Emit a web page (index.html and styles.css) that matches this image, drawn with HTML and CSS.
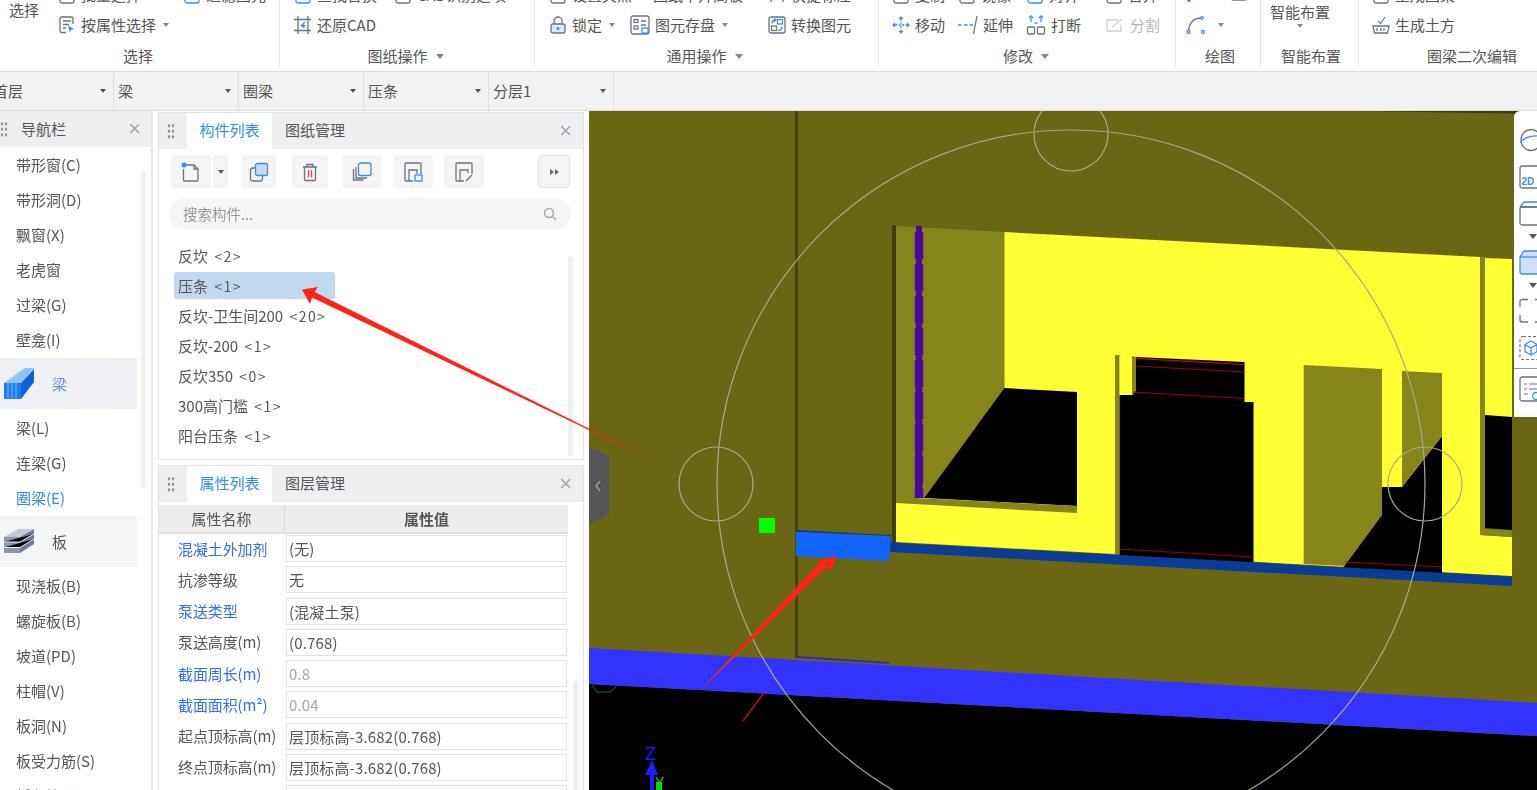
FILE: index.html
```html
<!DOCTYPE html>
<html lang="zh">
<head>
<meta charset="utf-8">
<title>圈梁</title>
<link rel="stylesheet" href="styles.css">
</head>
<body>
<div class="app">
  <header class="ribbon">
    <section class="group g1">
      <div class="rows">
        <span class="big">选择</span>
        <span class="item"><svg class="ic" viewBox="0 0 18 18"><rect x="2" y="1" width="14" height="16" rx="2" class="g"/></svg>批量选择</span>
        <span class="item"><svg class="ic" viewBox="0 0 18 18"><rect x="2" y="1" width="14" height="16" rx="2" class="b"/></svg>过滤图元</span>
        <span class="item"><svg class="ic" viewBox="0 0 18 18"><path class="g" d="M8 16.500H3.500a1.500 1.500 0 0 1-1.500-1.500V2.500A1.500 1.500 0 0 1 3.500 1h10A1.500 1.500 0 0 1 15 2.500V8"/><path class="g" d="M5 5h8M5 8.500h6M5 12h3"/><path class="bf" d="M10 9.500l6 3.500-3 .8-1.200 2.700z"/></svg>按属性选择<i class="caret"></i></span>
      </div>
      <div class="label">选择</div>
    </section>
    <section class="group g2">
      <div class="rows">
        <span class="item"><svg class="ic" viewBox="0 0 18 18"><rect x="2" y="1" width="14" height="16" rx="2" class="b"/></svg>查找替换</span>
        <span class="item"><svg class="ic" viewBox="0 0 18 18"><rect x="2" y="1" width="14" height="16" rx="2" class="g"/></svg>CAD识别选项</span>
        <span class="item"><svg class="ic" viewBox="0 0 18 18"><path class="g" d="M4 0v18M0 3.500h17M14 0v18M0 14.500h17"/><path class="bs" d="M11 6L7.500 9.500h4M8 9.500l2.500 2.500"/></svg>还原CAD</span>
      </div>
      <div class="label">图纸操作<i class="caret lg"></i></div>
    </section>
    <section class="group g3">
      <div class="rows">
        <span class="item"><svg class="ic" viewBox="0 0 18 18"><rect x="2" y="1" width="14" height="16" rx="2" class="g"/></svg>设置夹点</span>
        <span class="item"><svg class="ic" viewBox="0 0 18 18"><path class="bf" d="M9 2l2 4 4 .5-3 3 1 4-4-2-4 2 1-4-3-3 4-.5z"/></svg>图纸中升高板</span>
        <span class="item"><svg class="ic" viewBox="0 0 18 18"><path class="g" d="M3 2v14M15 2v14"/></svg>快捷标注</span>
        <span class="item"><svg class="ic" viewBox="0 0 18 18"><rect class="lbl g" x="2" y="8" width="14" height="9" rx="2"/><path class="g" d="M5 8V5a4 4 0 0 1 8 0v3"/><circle class="bf" cx="9" cy="12.500" r="1.500"/></svg>锁定<i class="caret"></i></span>
        <span class="item"><svg class="ic w20" viewBox="0 0 20 20"><rect class="g" x="1" y="1" width="18" height="18" rx="2"/><rect class="g" x="4" y="4.500" width="4" height="3"/><rect class="g" x="4" y="11" width="4" height="3"/><path class="g" d="M11 6h5M11 10h5"/><rect class="bs" x="12" y="13" width="6" height="5"/></svg>图元存盘<i class="caret"></i></span>
        <span class="item"><svg class="ic" viewBox="0 0 18 18"><rect class="g" x="1" y="1" width="16" height="16" rx="2"/><rect class="bs" x="9.500" y="3.500" width="5" height="4.500"/><rect class="g" x="3.500" y="10" width="5" height="4.500"/><path class="bs" d="M4 7.500C4 5 5.500 4 8 4M6 2.500L8 4 6 5.500M14 10.500c0 2.500-1.500 4-4 4"/></svg>转换图元</span>
      </div>
      <div class="label">通用操作<i class="caret lg"></i></div>
    </section>
    <section class="group g4">
      <div class="rows">
        <span class="item"><svg class="ic" viewBox="0 0 18 18"><rect x="2" y="1" width="14" height="16" rx="2" class="g"/></svg>复制</span>
        <span class="item"><svg class="ic" viewBox="0 0 18 18"><rect x="2" y="1" width="14" height="16" rx="2" class="g"/></svg>镜像</span>
        <span class="item"><svg class="ic" viewBox="0 0 18 18"><rect x="2" y="1" width="14" height="16" rx="2" class="b"/></svg>对齐</span>
        <span class="item"><svg class="ic" viewBox="0 0 18 18"><rect x="2" y="1" width="14" height="16" rx="2" class="g"/></svg>合并</span>
        <span class="item"><svg class="ic" viewBox="0 0 18 18"><path class="bs" d="M9 3v12M3 9h12" stroke-dasharray="2 1.500"/><path class="bf" d="M9 0l2.500 3h-5zM9 18l-2.500-3h5zM0 9l3-2.500v5zM18 9l-3-2.500v5z"/></svg>移动</span>
        <span class="item"><svg class="ic w20" viewBox="0 0 20 20"><path class="bs" d="M0 10h3.500M6 10h3.500M11.500 10h3.500"/><path class="g" d="M19 1l-3.500 18"/></svg>延伸</span>
        <span class="item"><svg class="ic w20" viewBox="0 0 20 20"><rect class="g" x="1.500" y="12" width="7" height="7" rx="1"/><rect class="g" x="11.500" y="12" width="7" height="7" rx="1"/><path class="bs" d="M5 7V3M15 7V3M3 3l2-2 2 2M13 3l2-2 2 2M8.500 8H11.500"/></svg>打断</span>
        <span class="item off"><svg class="ic w20" viewBox="0 0 20 20"><path class="lt" d="M13 5H2v11h14v-6"/><path class="lt" d="M7 12l10-8"/></svg>分割</span>
      </div>
      <div class="label">修改<i class="caret lg"></i></div>
    </section>
    <section class="group g5">
      <div class="rows">
        <span class="item"><svg class="ic" viewBox="0 0 18 18"><circle class="bf" cx="3" cy="14" r="2"/></svg></span>
        <span class="item"><svg class="ic" viewBox="0 0 18 18"><rect x="1" y="1" width="16" height="13" rx="2" class="g"/></svg></span>
        <span class="item"><svg class="ic w20" viewBox="0 0 20 20"><path class="g" d="M2.500 16C3 8 8 3 15 3"/><circle class="bs" cx="2.500" cy="17" r="1.500"/><circle class="bs" cx="16" cy="3" r="1.300"/><circle class="bs" cx="17" cy="17" r="1.500"/></svg><i class="caret"></i></span>
      </div>
      <div class="label">绘图</div>
    </section>
    <section class="group g6">
      <div class="smart"><span>智能布置</span><i class="caret"></i></div>
      <div class="label">智能布置</div>
    </section>
    <section class="group g7">
      <div class="rows">
        <span class="item"><svg class="ic" viewBox="0 0 18 18"><rect x="2" y="1" width="14" height="16" rx="2" class="g"/></svg>生成圈梁</span>
        <span class="item"><svg class="ic" viewBox="0 0 18 18"><path class="g" d="M1 10h16l-1.500 7h-13z"/><path class="g" d="M5 15v-3M9 15v-3M12 15v-3"/><path class="bs" d="M6 5l2.500 2.500L13 1"/></svg>生成土方</span>
      </div>
      <div class="label">圈梁二次编辑</div>
    </section>
  </header>

  <nav class="selects">
    <div class="sel first"><span>首层</span><i class="caret dk"></i></div>
    <div class="sel"><span>梁</span><i class="caret dk"></i></div>
    <div class="sel"><span>圈梁</span><i class="caret dk"></i></div>
    <div class="sel"><span>压条</span><i class="caret dk"></i></div>
    <div class="sel"><span>分层1</span><i class="caret dk"></i></div>
  </nav>

  <main class="main">
    <aside class="nav">
      <div class="nav-head">
        <span class="dots sm"></span>
        <span class="nav-title">导航栏</span>
        <span class="close">×</span>
      </div>
      <div class="nav-body">
        <a>带形窗(C)</a><a>带形洞(D)</a><a>飘窗(X)</a><a>老虎窗</a><a>过梁(G)</a><a>壁龛(I)</a>
        <div class="cat on">
          <svg class="cat-ic" viewBox="0 0 30 32"><path fill="#8cc4ff" d="M0 15L21 0h9L17 15z"/><path fill="#1e7cf0" d="M0 15h17v16H0z"/><path fill="#0d62d6" d="M17 15L30 1v13L17 31z"/><path stroke="#7db8fb" d="M4 15v16M8 15v16M12 15v16"/></svg>
          <span>梁</span>
        </div>
        <a>梁(L)</a><a>连梁(G)</a><a class="cur">圈梁(E)</a>
        <div class="cat">
          <svg class="cat-ic" viewBox="0 0 30 26"><path fill="#c4cad8" d="M0 8L14 0h16L16 8z"/><path fill="#8a95ad" d="M0 8h16v16H0z"/><path fill="#6f7a93" d="M16 8L30 0v15L16 24z"/><path stroke="#e6e9f0" d="M0 13h16L30 5M0 18.500h16L30 10"/></svg>
          <span>板</span>
        </div>
        <a>现浇板(B)</a><a>螺旋板(B)</a><a>坡道(PD)</a><a>柱帽(V)</a><a>板洞(N)</a><a>板受力筋(S)</a><a>板负筋(F)</a>
      </div>
      <span class="nav-scroll"></span>
    </aside>

    <div class="panels">
      <section class="panel top">
        <div class="tabs">
          <span class="dots"></span>
          <span class="tab active">构件列表</span>
          <span class="tab">图纸管理</span>
          <span class="close">×</span>
        </div>
        <div class="tools">
          <span class="btn new"><svg viewBox="0 0 20 20" width="20" height="20"><path class="g" d="M5 3h8l4 4v11a1 1 0 0 1-1 1H3.500a1 1 0 0 1-1-1V7"/><path class="g" d="M13 3v4h4"/><path class="bs" d="M1 1l4 4M5 1L1 5M3 .5v5M.5 3h5"/></svg></span>
          <span class="btn more"><i class="caret dk"></i></span>
          <span class="btn"><svg viewBox="0 0 20 20" width="20" height="20"><rect class="g" x="1.500" y="6" width="12" height="13" rx="2.500"/><rect class="bs fillb" x="6.500" y="1.500" width="12" height="12" rx="2"/></svg></span>
          <span class="btn"><svg viewBox="0 0 20 20" width="20" height="20"><path class="g" d="M3 5h14M7 5V2.500h6V5M4.500 5v12.500a1 1 0 0 0 1 1h9a1 1 0 0 0 1-1V5"/><path class="rs" d="M8.500 8v7.500M11.500 8v7.500"/></svg></span>
          <span class="btn"><svg viewBox="0 0 20 20" width="20" height="20"><path class="g" d="M1.500 7v11h10M4 5v11h11"/><rect class="bs" x="6.500" y="1" width="12.500" height="12.500" rx="2"/></svg></span>
          <span class="btn"><svg viewBox="0 0 20 20" width="20" height="20"><path class="g" d="M10 19H3a1 1 0 0 1-1-1V2a1 1 0 0 1 1-1h14a1 1 0 0 1 1 1v10"/><path class="g" d="M6 19V8h8v4"/><rect class="bs" x="12" y="13" width="7" height="6"/></svg></span>
          <span class="btn"><svg viewBox="0 0 20 20" width="20" height="20"><path class="g" d="M10 19H3a1 1 0 0 1-1-1V2a1 1 0 0 1 1-1h14a1 1 0 0 1 1 1v10"/><path class="g" d="M6 19V8h8v3"/><path class="g" d="M12 19l6-6"/></svg></span>
          <span class="btn end"><i class="ff"></i><i class="ff"></i></span>
        </div>
        <div class="search">
          <span>搜索构件...</span>
          <svg viewBox="0 0 14 14" width="14" height="14"><circle cx="6" cy="6" r="4.500" fill="none" stroke="#a8a8a8" stroke-width="1.500"/><path d="M9.500 9.500L13 13" stroke="#a8a8a8" stroke-width="1.500"/></svg>
        </div>
        <ul class="list">
          <li>反坎 <em>&lt;2&gt;</em></li>
          <li class="sel-row">压条 <em>&lt;1&gt;</em></li>
          <li>反坎-卫生间200 <em>&lt;20&gt;</em></li>
          <li>反坎-200 <em>&lt;1&gt;</em></li>
          <li>反坎350 <em>&lt;0&gt;</em></li>
          <li>300高门槛 <em>&lt;1&gt;</em></li>
          <li>阳台压条 <em>&lt;1&gt;</em></li>
        </ul>
        <span class="list-scroll"></span>
      </section>

      <section class="panel props">
        <div class="tabs">
          <span class="dots"></span>
          <span class="tab active">属性列表</span>
          <span class="tab">图层管理</span>
          <span class="close">×</span>
        </div>
        <div class="thead"><span>属性名称</span><span class="val">属性值</span></div>
        <div class="prow"><label class="link">混凝土外加剂</label><span class="in">(无)</span></div>
        <div class="prow"><label>抗渗等级</label><span class="in">无</span></div>
        <div class="prow"><label class="link">泵送类型</label><span class="in">(混凝土泵)</span></div>
        <div class="prow"><label>泵送高度(m)</label><span class="in">(0.768)</span></div>
        <div class="prow"><label class="link">截面周长(m)</label><span class="in dis">0.8</span></div>
        <div class="prow"><label class="link">截面面积(m²)</label><span class="in dis">0.04</span></div>
        <div class="prow"><label>起点顶标高(m)</label><span class="in">层顶标高-3.682(0.768)</span></div>
        <div class="prow"><label>终点顶标高(m)</label><span class="in">层顶标高-3.682(0.768)</span></div>
        <div class="prow"><label></label><span class="in"></span></div>
        <span class="prop-scroll"></span>
      </section>
    </div>

    <div class="view">
      <svg class="scene" viewBox="589 111 948 679" width="948" height="679">
        <rect x="589" y="111" width="948" height="679" fill="#6b6614"/>
        <path fill="#3f3d0c" d="M1360 111h177v3z"/>
        <!-- floor band and void -->
        <path fill="#000" d="M589 684L1537 736V790H589z"/>
        <path fill="#3333ff" d="M589 648L1537 703V736L589 684z"/>
        <path fill="none" stroke="#0a7a0a" stroke-width="1" d="M592 685l5 7h13l6-5"/>
        <path stroke="#b01010" stroke-width="1.500" d="M763 694L743 721"/>
        <!-- wall edges -->
        <path stroke="#3f3d0c" stroke-width="2.500" d="M796.500 111V658"/>
        <path stroke="#2e2e9e" stroke-width="2" d="M797 657L889 663"/>
        <path fill="#3f3d0c" d="M892 225h4v318h-4z"/>
        <!-- yellow wall -->
        <path fill="#ffff33" d="M1004 232L1480 257V535L1512 537V576L896 542V503L1004 400z"/>
        <path fill="#ffff33" d="M1485 258L1512 259V420H1485z"/>
        <path fill="#88841c" d="M1480 257h5V529L1512 530V537L1480 535z"/>
        <path fill="#000" d="M1485 415L1512 417V530L1485 528z"/>
        <!-- left bay -->
        <path fill="#88841c" d="M896 226L1004.500 232V388L924 498H896z"/>
        <path fill="#4b0a96" d="M916 226H922L922.500 498H915z"/>
        <path stroke="#4b0a96" stroke-width="8.500" stroke-dasharray="27 5" d="M919 232V498"/>
        <path fill="#000" d="M1004.500 388L1077 392V506L924 498z"/>
        <path fill="#88841c" d="M896 497L1077 506V513L896 503z"/>
        <!-- door -->
        <path fill="#88841c" d="M1115 355H1119.600V554L1115 554z"/>
        <path fill="#000" d="M1119.600 395L1133 395L1136 357L1244.500 362V402L1253.500 402V564L1119.600 556z"/>
        <path fill="#ffff33" d="M1119.600 356H1132V395H1119.600z"/>
        <path fill="#88841c" d="M1132 356L1136 357V391L1132 395z"/>
        <path stroke="#f00000" stroke-width="1.200" d="M1136 358.500L1244.500 364.500"/>
        <path stroke="#a00000" stroke-width="1" d="M1136 366L1244.500 372M1134 392L1244.500 398.500M1119.600 549L1253.500 557"/>
        <!-- right bay -->
        <path fill="#88841c" d="M1303.700 365L1382 369V515L1344 566L1303.700 564z"/>
        <path fill="#000" d="M1382 515V487L1402 487L1442 436V575L1342 569z"/>
        <path fill="#88841c" d="M1402 371L1442 373V436L1402 487z"/>
        <path stroke="#a00000" stroke-width="1" d="M1345 562L1442 567"/>
        <!-- blue strips -->
        <path fill="#0a3c96" d="M891 542.500L1512 576.500V586L890 552z"/>
        <path fill="#0a3c96" d="M796 530L891 535V552L889 536L796 532z"/>
        <path fill="#1464ff" d="M796 532L890.700 536.500L889 561L796 556z"/>
        <rect x="759" y="518" width="16" height="15" fill="#00ff00"/>
        <!-- rings -->
        <g fill="none" stroke="#a9a98c" stroke-width="1.200">
          <circle cx="1071" cy="484" r="354"/>
          <circle cx="716" cy="484" r="37"/>
          <circle cx="1071" cy="134" r="37"/>
          <circle cx="1425" cy="484" r="37"/>
        </g>
        <!-- axis -->
        <text x="645" y="760" class="axis-z">Z</text>
        <path fill="#1c1cff" d="M652 760L658 775H654V790H650V775H645z"/>
        <path fill="#00e000" d="M656 782h6v8h-6z"/>
        <text x="655" y="787" class="axis-y">Y</text>
      </svg>
      <div class="handle"><svg viewBox="0 0 8 12" width="8" height="12"><path d="M6 1L2 6l4 5" fill="none" stroke="#9a9a9a" stroke-width="1.500"/></svg></div>
      <div class="side">
        <svg class="sphere" viewBox="0 0 23 24" width="23" height="24"><ellipse cx="12" cy="12" rx="10" ry="10.500" fill="none" stroke="#6b7280" stroke-width="1.300"/><path d="M1.500 15C5 9 12 7 23 8" fill="none" stroke="#3d8bf0" stroke-width="1.300"/></svg>
        <svg viewBox="0 0 23 24" width="23" height="24"><rect x="1" y="1" width="26" height="22" rx="2" fill="none" stroke="#6b7280" stroke-width="1.300"/><text x="2.500" y="20" class="two-d">2D</text></svg>
        <svg viewBox="0 0 23 26" width="23" height="26"><path d="M1 7L5 2H30" fill="none" stroke="#3d8bf0" stroke-width="1.300"/><path d="M1 7H30" stroke="#3d8bf0" stroke-width="1.300"/><rect x="1" y="7" width="28" height="18" rx="2" fill="none" stroke="#6b7280" stroke-width="1.300"/></svg>
        <i class="side-caret"></i>
        <svg viewBox="0 0 23 26" width="23" height="26"><path d="M1 8L5 2H30V25H3a2 2 0 0 1-2-2z" fill="#cfe0f8" stroke="#3d8bf0" stroke-width="1.300"/><path d="M1 8H30" stroke="#3d8bf0" stroke-width="1.300"/></svg>
        <i class="side-caret"></i>
        <svg viewBox="0 0 23 26" width="23" height="26"><path d="M9 1.500H3a2 2 0 0 0-2 2V9M1 17v5a2 2 0 0 0 2 2h6M16 1.500h6M16 24h6" fill="none" stroke="#6b7280" stroke-width="1.300"/></svg>
        <svg viewBox="0 0 23 26" width="23" height="26"><rect x="1" y="1.500" width="26" height="23" rx="3" fill="none" stroke="#6b7280" stroke-width="1.200" stroke-dasharray="3 2"/><path d="M12 6l6 3.500v7L12 20l-6-3.500v-7zM6 9.500l6 3.500 6-3.500M12 13v7" fill="none" stroke="#3d8bf0" stroke-width="1.300"/></svg>
        <hr class="side-sep">
        <svg viewBox="0 0 23 26" width="23" height="26"><rect x="1" y="1" width="26" height="24" rx="2" fill="none" stroke="#6b7280" stroke-width="1.300"/><path d="M5 8h3M10 8h12M5 13h3M10 13h12M5 18h4" stroke="#6b7280" stroke-width="1.200"/><circle cx="17" cy="20" r="3.500" fill="none" stroke="#3d8bf0" stroke-width="1.300"/></svg>
      </div>
    </div>
  </main>

  <svg class="marks" viewBox="0 0 1537 790" width="1537" height="790">
    <path fill="#ff2418" d="M302 289.500L318 287L314.500 292L662 465L312 297.500L310 304z"/>
    <path fill="#ff2418" d="M836 556L831 572L826.500 566.500L697 694L820.500 561.500L817 561z"/>
  </svg>
</div>
</body>
</html>
```
FILE: styles.css
```css
* { box-sizing: border-box; }
html, body { margin: 0; height: 100%; overflow: hidden; background: #fff; }
body { font: 15px/20px "Noto Sans CJK SC", "Liberation Sans", sans-serif; color: #555; }
.app { position: relative; width: 1537px; height: 790px; overflow: hidden; display: flex; flex-direction: column; filter: blur(.4px); }

/* shared strokes */
.g, .b, .bs, .rs, .lt { fill: none; stroke-width: 1.300; }
.g { stroke: #6b7280; }
.b, .bs { stroke: #3d8bf0; }
.rs { stroke: #e0483c; }
.lt { stroke: #cfcfcf; }
.bf { fill: #3d8bf0; }
.fillb { fill: #c6daf6; }
.lbl { fill: #dbe8f8; }

.caret { display: inline-block; width: 0; height: 0; border: 3.500px solid transparent; border-top: 4px solid #888; border-bottom: 0; margin-left: 7px; }
.caret.lg { border-width: 4.500px; border-top-width: 5px; border-bottom-width: 0; margin-left: 8px; }
.caret.dk { border-top-color: #555; margin-left: 0; border-width: 3px; border-top-width: 4px; border-bottom-width: 0; }

/* ribbon */
.ribbon { flex: 0 0 72px; display: flex; align-items: flex-start; background: #fff; border-bottom: 1px solid #dedede; overflow: hidden; }
.group { flex: none; height: 66px; display: flex; flex-direction: column; justify-content: flex-end; border-right: 1px solid #e2e2e2; white-space: nowrap; }
.g1 { width: 280px; }
.g2 { width: 255px; }
.g3 { width: 344px; }
.g4 { width: 297px; }
.g5 { width: 85px; }
.g6 { width: 98px; }
.g7 { flex: 1; border-right: 0; }
.rows { display: grid; grid-auto-rows: 30px; align-items: center; margin-bottom: 6px; }
.g1 .rows { grid-template-columns: 49px 125px 1fr; padding-left: 9px; }
.g2 .rows { grid-template-columns: 100px 1fr; padding-left: 14px; }
.g3 .rows { grid-template-columns: 81px 138px 1fr; padding-left: 14px; }
.g4 .rows { grid-template-columns: 66px 68px 79px 1fr; padding-left: 13px; }
.g5 .rows { grid-template-columns: 44px 1fr; padding-left: 10px; }
.g7 .rows { padding-left: 13px; }
.big { grid-row: 1 / span 2; align-self: start; padding-top: 20px; }
.item { display: flex; align-items: center; color: #555; }
.item.off { color: #b5b5b5; }
.ic { width: 18px; height: 18px; flex: none; margin-right: 5px; }
.ic.w20 { width: 20px; height: 20px; }
.label { height: 20px; line-height: 20px; text-align: center; display: flex; align-items: center; justify-content: center; }
.g1 .label { margin-left: -3px; }
.g2 .label { padding-right: 3px; }
.g3 .label { padding-right: 4px; }
.g4 .label { padding-right: 2px; }
.g5 .label { justify-content: flex-end; padding-right: 25px; }
.g6 .label { margin-left: 20px; justify-content: flex-start; }
.g7 .label { justify-content: flex-end; padding-right: 20px; }
.smart { flex: 1; display: flex; flex-direction: column; padding: 0 0 6px 9px; align-items: flex-start; margin-top: -4px; }
.smart .caret { margin: 2px 0 0 27px; }
.smart span { margin-top: 6px; }

/* select row */
.selects { flex: 0 0 39px; display: flex; background: #f2f2f2; border-bottom: 1px solid #dcdcdc; }
.sel { width: 125px; display: flex; align-items: center; justify-content: space-between; padding: 0 7px 0 4px; border-right: 1px solid #e0e0e0; }
.sel.first { width: 114px; padding-left: 0; }
.sel.first span { margin-left: -7px; }

/* main */
.main { flex: 1; display: flex; min-height: 0; position: relative; }

.nav { flex: 0 0 153px; position: relative; border-right: 2px solid #e8e8e8; overflow: hidden; background: #fff; }
.nav-head { height: 36px; background: #eeeff1; display: flex; align-items: center; padding-left: 21px; position: relative; }
.nav-head .close { right: 10px; }
.nav-body { display: flex; flex-direction: column; }
.nav-body a { height: 35px; line-height: 35px; padding-left: 16px; flex: none; }
.nav-body a.cur { color: #2f8cf0; }
.cat { flex: none; width: 137px; height: 51px; margin-top: 1px; background: #f4f5f7; display: flex; align-items: center; }
.cat.on { background: #eff0f3; color: #6f8fe0; }
.cat-ic { width: 30px; height: 32px; margin: 0 18px 0 4px; flex: none; }
.nav-body .cat + a { margin-top: 1px; }
.nav-scroll { position: absolute; left: 141px; top: 60px; width: 5px; height: 317px; background: #f1f1f1; border-radius: 3px; }
.close { position: absolute; right: 11px; top: 50%; transform: translateY(-50%); color: #a6a6a6; font-size: 22px; font-family: "Liberation Sans", sans-serif; line-height: 1; }
.dots { position: absolute; left: 8px; top: 10px; width: 8px; height: 16px; background: radial-gradient(circle, #8a8a8a 1.300px, transparent 1.600px) 0 0 / 4px 5.500px; }
.dots.sm { left: 0; }

.panels { flex: 0 0 426px; margin-left: 5px; display: flex; flex-direction: column; gap: 5px; padding-top: 1px; }
.panel { position: relative; background: #fff; border: 1px solid #e4e4e4; overflow: hidden; }
.panel.top { flex: 0 0 348px; }
.panel.props { flex: 1; border-bottom: 0; }
.tabs { height: 36px; background: #eeeff1; display: flex; position: relative; padding-left: 28px; }
.tab { width: 85px; line-height: 33px; text-align: center; }
.tab + .tab { width: 86px; }
.tab.active { background: #fff; color: #2f8cf0; }

.tools { display: flex; padding: 6px 0 0 12px; height: 47px; align-items: flex-start; }
.btn { flex: none; height: 33px; width: 35px; margin-right: 16px; background: #f5f5f5; border-radius: 4px; display: flex; align-items: center; justify-content: center; }
.btn.new { width: 40px; margin-right: 2px; border-radius: 4px 0 0 4px; }
.btn.more { width: 15px; margin-right: 13px; border-radius: 0 4px 4px 0; }
.btn:nth-child(5), .btn:nth-child(6), .btn:nth-child(7) { width: 40px; margin-right: 11px; }
.btn:nth-child(4) { width: 36px; margin-right: 14px; }
.btn.end { width: 32px; margin: 0 0 0 43px; border: 1px solid #e3e3e3; gap: 1px; }
.ff { width: 0; height: 0; border: 3.500px solid transparent; border-left: 4px solid #666; border-right: 0; }

.search { margin: 2px 12px 0 10px; height: 32px; background: #f5f5f5; border-radius: 16px; display: flex; align-items: center; justify-content: space-between; padding: 0 14px; color: #999; font-size: 14.500px; }

.list { list-style: none; margin: 0; padding: 11px 0 0 15px; }
.list li { height: 30px; line-height: 30px; padding-left: 4px; width: 161px; white-space: nowrap; }
.list li em { font-style: normal; margin-left: 3px; font-size: 14px; letter-spacing: 1.400px; }
.list li.sel-row { background: #c0d8f0; border-radius: 3px; height: 27px; line-height: 27px; margin: 1px 0 2px; }
.list-scroll { position: absolute; left: 409px; top: 143px; width: 5px; height: 200px; background: #efefef; border-radius: 3px; }

.thead { display: flex; margin: 3px 0 -1px; width: 409px; height: 29px; background: #ededed; border-bottom: 2px solid #dfdfdf; text-align: center; line-height: 27px; }
.thead span { width: 126px; border-right: 1px solid #dadada; }
.thead .val { flex: 1; border-right: 0; font-weight: 700; }
.prow { display: flex; height: 31.250px; align-items: center; padding-left: 19px; white-space: nowrap; }
.prow label { flex: 0 0 108px; letter-spacing: -.1px; }
.prow label.link { color: #2f6ff0; }
.in { flex: 0 0 281px; height: 27px; border: 1px solid #e2e2e2; line-height: 25px; padding-left: 2px; background: #fff; letter-spacing: .15px; }
.in.dis { color: #a6a6a6; }
.prop-scroll { position: absolute; left: 414px; top: 215px; width: 5px; height: 120px; background: #efefef; border-radius: 3px; }

/* viewport */
.view { flex: 1; margin-left: 5px; position: relative; overflow: hidden; min-width: 0; background: #6b6614; }
.scene { display: block; }
.axis-z { fill: #1c1cff; font: 18px "Liberation Sans", sans-serif; }
.axis-y { fill: #19d419; font: 14px "Liberation Sans", sans-serif; }
.handle { position: absolute; left: 0; top: 336px; width: 20px; height: 77px; background: #555; clip-path: polygon(0 0, 70% 7%, 100% 14%, 100% 86%, 70% 93%, 0 100%); display: flex; align-items: center; justify-content: center; padding-right: 2px; }
.side { position: absolute; right: 0; top: 0; width: 23px; height: 306px; background: #fff; border-radius: 6px 0 0 0; padding-top: 17px; display: flex; flex-direction: column; overflow: hidden; }
.side svg { flex: none; margin: 0 0 11px 5px; }
.side svg.sphere { margin-bottom: 13px; }
.two-d { font: 700 10px "Liberation Sans", sans-serif; fill: #3d8bf0; }
.side-caret { align-self: flex-start; margin: -3px 0 10px 15px; width: 0; height: 0; border: 4px solid transparent; border-top: 5px solid #555; border-bottom: 0; }
.side-sep { width: 23px; margin: -4px 0 7px; border: 0; border-top: 1px solid #999; flex: none; }

.marks { position: absolute; left: 0; top: 0; pointer-events: none; }
```
